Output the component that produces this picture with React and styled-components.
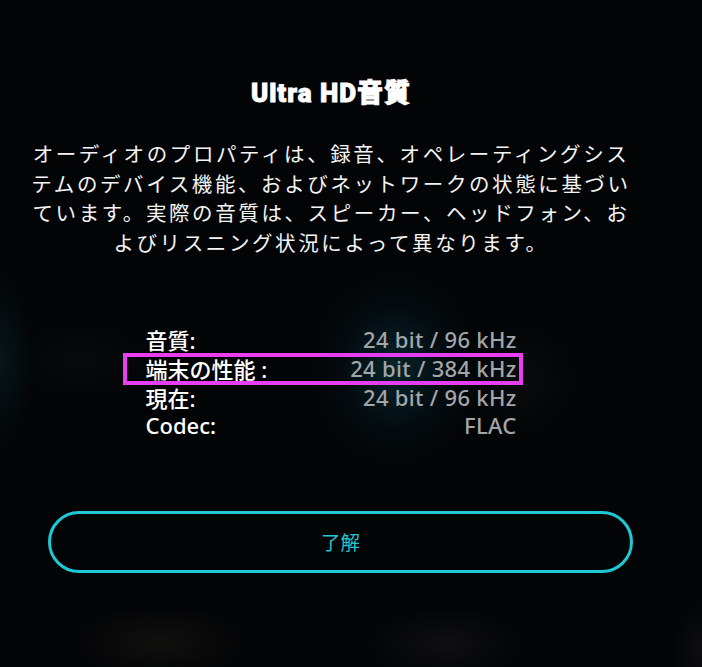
import React from "react";
import styled, { createGlobalStyle } from "styled-components";

const GlobalStyle = createGlobalStyle`
  html, body {
    margin: 0;
    padding: 0;
    background: #030405;
  }
`;

const Page = styled.div`
  width: 702px;
  height: 667px;
  overflow: hidden;
  background:
    radial-gradient(ellipse 85px 100px at 395px 368px, rgba(8, 50, 58, 0.7), rgba(5, 30, 42, 0.3) 60%, transparent 100%),
    radial-gradient(ellipse 35px 90px at 0px 360px, rgba(10, 42, 52, 0.45), transparent 100%),
    radial-gradient(ellipse 60px 60px at 520px 380px, rgba(25, 28, 30, 0.3), transparent 100%),
    radial-gradient(ellipse 70px 40px at 80px 360px, rgba(25, 28, 30, 0.25), transparent 100%),
    radial-gradient(ellipse 90px 38px at 160px 642px, rgba(30, 28, 25, 0.5), transparent 100%),
    radial-gradient(ellipse 80px 38px at 445px 644px, rgba(26, 26, 30, 0.5), transparent 100%),
    radial-gradient(ellipse 30px 50px at 702px 650px, rgba(26, 26, 28, 0.45), transparent 100%),
    #030405;
`;

const Panel = styled.div`
  width: 662px;
  padding-top: 78px;
  display: flex;
  flex-direction: column;
  align-items: center;
`;

const Title = styled.h1`
  margin: 0;
  font-family: Roboto, "Noto Sans CJK JP", sans-serif;
  font-weight: 900;
  font-size: 26px;
  line-height: 31px;
  letter-spacing: 1px;
  color: #ffffff;
  -webkit-text-stroke: 0.9px #ffffff;
`;

const Description = styled.p`
  margin: 30px 0 0;
  width: 612px;
  font-family: "Noto Sans CJK JP", sans-serif;
  font-weight: 400;
  font-size: 20.5px;
  line-height: 29.7px;
  letter-spacing: 2.6px;
  text-align: center;
  color: #f4f4f4;
`;

const Specs = styled.div`
  margin-top: 67px;
  width: 371px;
  display: flex;
  flex-direction: column;
`;

const SpecRow = styled.div`
  position: relative;
  display: flex;
  justify-content: space-between;
  align-items: center;
  height: 28.7px;
  font-family: "Noto Sans", "Noto Sans CJK JP", sans-serif;
  font-size: 22px;
  font-weight: 500;

  ${(p) =>
    p.$highlight &&
    `
    &::after {
      content: "";
      position: absolute;
      top: -1px;
      bottom: -3px;
      left: -23px;
      right: -6px;
      border: 4px solid #e83ef2;
      pointer-events: none;
    }
  `}
`;

const Label = styled.span`
  color: #ffffff;
`;

const Value = styled.span`
  color: #a3a6a8;
  letter-spacing: 0.3px;
`;

const Button = styled.button`
  margin: 71px 0 0 48px;
  align-self: flex-start;
  width: 585px;
  height: 62px;
  border: 3px solid #1ec8d4;
  border-radius: 31px;
  background: transparent;
  color: #22c6d2;
  font-family: "Noto Sans CJK JP", sans-serif;
  font-size: 19.5px;
  cursor: pointer;
`;

const specs = [
  { label: "音質:", value: "24 bit / 96 kHz" },
  { label: "端末の性能 :", value: "24 bit / 384 kHz", highlight: true },
  { label: "現在:", value: "24 bit / 96 kHz" },
  { label: "Codec:", value: "FLAC" },
];

export default function App() {
  return (
    <Page>
      <GlobalStyle />
      <Panel>
        <Title>Ultra HD音質</Title>
        <Description>
          オーディオのプロパティは、録音、オペレーティングシス
          <br />
          テムのデバイス機能、およびネットワークの状態に基づい
          <br />
          ています。実際の音質は、スピーカー、ヘッドフォン、お
          <br />
          よびリスニング状況によって異なります。
        </Description>
        <Specs>
          {specs.map((s) => (
            <SpecRow key={s.label} $highlight={s.highlight}>
              <Label>{s.label}</Label>
              <Value>{s.value}</Value>
            </SpecRow>
          ))}
        </Specs>
        <Button>了解</Button>
      </Panel>
    </Page>
  );
}
